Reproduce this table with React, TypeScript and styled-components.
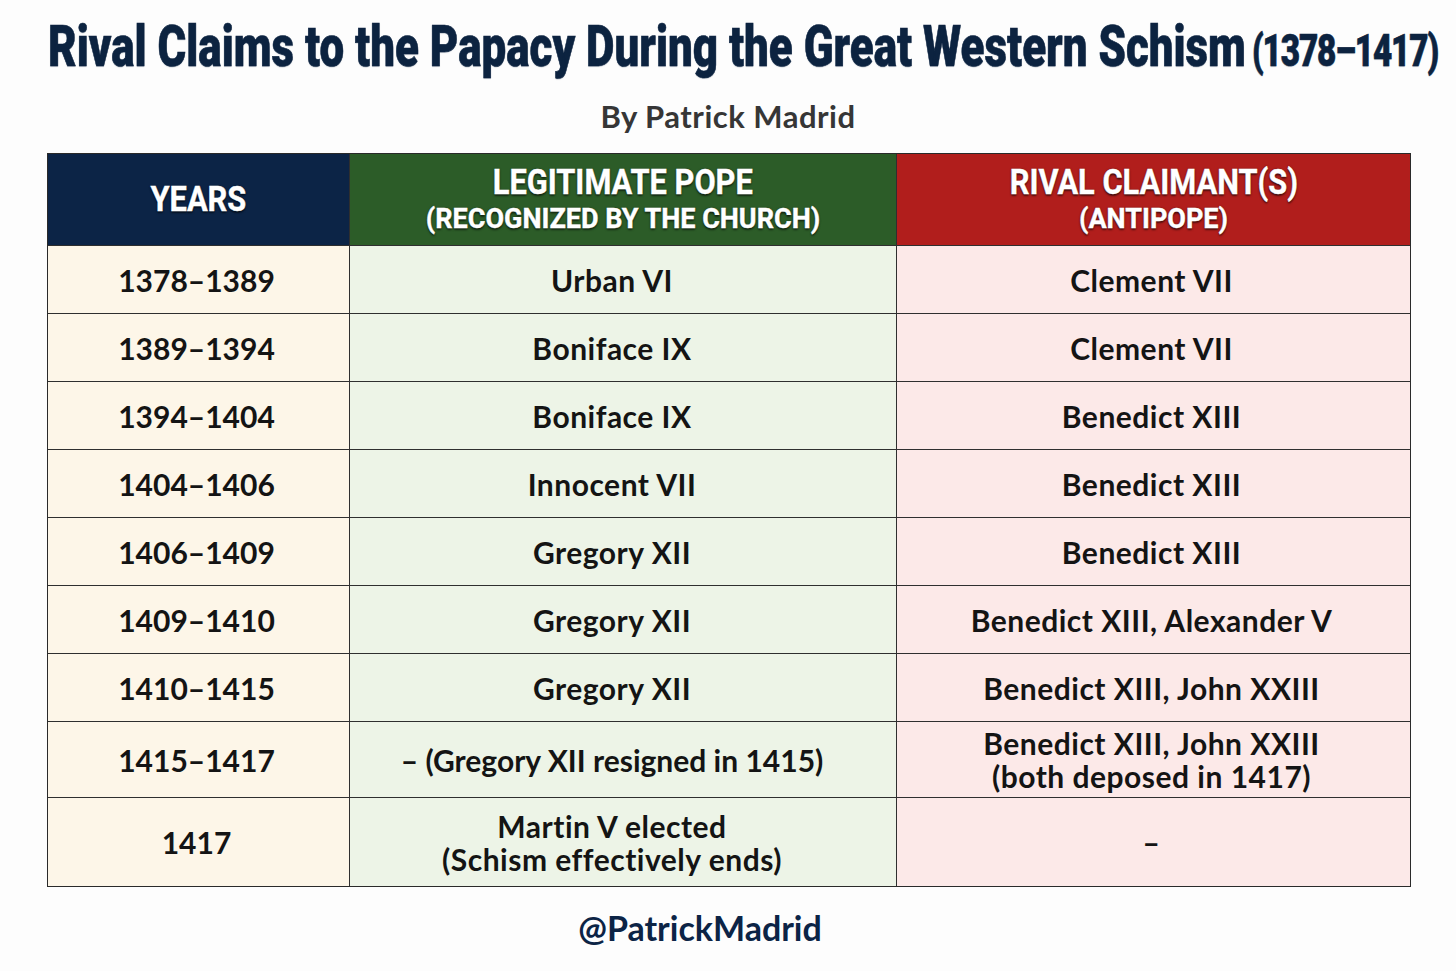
import React from 'react';
import styled, { createGlobalStyle } from 'styled-components';

const Global = createGlobalStyle`
  html, body { margin: 0; padding: 0; background: #fdfdfd; }
  body { font-family: Lato, "Noto Sans", sans-serif; }
`;

const Page = styled.div`
  width: 1456px;
  height: 971px;
  overflow: hidden;
  display: flex;
  flex-direction: column;
  align-items: center;
  box-sizing: border-box;
  padding-top: 12px;
`;

const Title = styled.h1`
  margin: 0;
  width: 100%;
  height: 72px;
  display: flex;
  justify-content: center;
  align-items: center;
  padding-left: 30px;
  box-sizing: border-box;
`;

const TitleText = styled.span`
  display: inline-block;
  white-space: nowrap;
  transform: scaleX(0.757);
  font-family: Roboto, "Liberation Sans", sans-serif;
  font-weight: 900;
  font-size: 58px;
  line-height: 72px;
  color: #0c2340;
  -webkit-text-stroke: 0.6px #0c2340;
  text-shadow: 0 1px 1px rgba(12, 35, 64, 0.25);
`;

const TitleYears = styled.span`
  font-size: 44px;
  letter-spacing: -1.5px;
  margin-left: 8px;
`;

const Byline = styled.div`
  margin-top: 12px;
  height: 40px;
  line-height: 40px;
  font-family: Lato, sans-serif;
  font-weight: 700;
  font-size: 31px;
  letter-spacing: 0.5px;
  color: #363636;
`;

const Table = styled.div`
  margin-top: 17px;
  margin-left: 2px;
  display: grid;
  grid-template-columns: 302px 547px 513px;
  grid-template-rows: 92px repeat(7, 68px) 76px 88px;
  border: 1.5px solid #2a2a2a;
`;

type Kind = 'years' | 'legit' | 'rival';

const headBg: Record<Kind, string> = {
  years: '#0c2446',
  legit: '#2c5c28',
  rival: '#b11e1c',
};

const bodyBg: Record<Kind, string> = {
  years: '#fdf6e8',
  legit: '#edf4e7',
  rival: '#fce9e8',
};

const Cell = styled.div<{ $kind: Kind; $head?: boolean; $lastRow?: boolean }>`
  box-sizing: border-box;
  display: flex;
  flex-direction: column;
  align-items: center;
  justify-content: center;
  text-align: center;
  padding-right: ${(p) => (!p.$head && p.$kind === 'legit' ? '22px' : p.$head ? '0' : '4px')};
  background: ${(p) => (p.$head ? headBg[p.$kind] : bodyBg[p.$kind])};
  border-right: ${(p) => (p.$kind === 'rival' ? 'none' : '1.5px solid #2f2f2f')};
  border-bottom: ${(p) => (p.$lastRow ? 'none' : '1.5px solid #2f2f2f')};
  color: #141414;
`;

const HeadMain = styled.span`
  display: block;
  white-space: nowrap;
  transform: scaleX(0.88);
  font-family: Roboto, "Liberation Sans", sans-serif;
  font-weight: 700;
  font-size: 35px;
  line-height: 38px;
  color: #fff;
  -webkit-text-stroke: 0.4px #fff;
  text-shadow: 0 2px 2px rgba(0, 0, 0, 0.55), 0 0 2px rgba(0, 0, 0, 0.5);
`;

const HeadSub = styled(HeadMain)`
  font-size: 27px;
  line-height: 34px;
  transform: none;
`;

const Main = styled.span<{ $tight?: boolean }>`
  display: block;
  white-space: nowrap;
  font-family: Lato, "Noto Sans", sans-serif;
  font-weight: 700;
  font-size: 30px;
  line-height: 34px;
  letter-spacing: ${(p) => (p.$tight ? '0' : '0.5px')};
`;

const Sub = styled(Main)`
  line-height: 33px;
`;

const Handle = styled.div`
  margin-top: 21px;
  margin-right: 56px;
  height: 40px;
  line-height: 40px;
  font-family: Lato, sans-serif;
  font-weight: 700;
  font-size: 34px;
  color: #0c2446;
`;

type Row = { years: string; legit: string[]; rival: string[] };

const rows: Row[] = [
  { years: '1378–1389', legit: ['Urban VI'], rival: ['Clement VII'] },
  { years: '1389–1394', legit: ['Boniface IX'], rival: ['Clement VII'] },
  { years: '1394–1404', legit: ['Boniface IX'], rival: ['Benedict XIII'] },
  { years: '1404–1406', legit: ['Innocent VII'], rival: ['Benedict XIII'] },
  { years: '1406–1409', legit: ['Gregory XII'], rival: ['Benedict XIII'] },
  { years: '1409–1410', legit: ['Gregory XII'], rival: ['Benedict XIII, Alexander V'] },
  { years: '1410–1415', legit: ['Gregory XII'], rival: ['Benedict XIII, John XXIII'] },
  {
    years: '1415–1417',
    legit: ['– (Gregory XII resigned in 1415)'],
    rival: ['Benedict XIII, John XXIII', '(both deposed in 1417)'],
  },
  {
    years: '1417',
    legit: ['Martin V elected', '(Schism effectively ends)'],
    rival: ['–'],
  },
];

const Lines: React.FC<{ lines: string[] }> = ({ lines }) => (
  <>
    {lines.map((l, i) =>
      i === 0 ? (
        <Main key={i} $tight={l.length > 28}>
          {l}
        </Main>
      ) : (
        <Sub key={i}>{l}</Sub>
      ),
    )}
  </>
);

export default function App() {
  return (
    <>
      <Global />
      <Page>
        <Title>
          <TitleText>
            Rival Claims to the Papacy During the Great Western Schism
            <TitleYears>(1378–1417)</TitleYears>
          </TitleText>
        </Title>
        <Byline>By Patrick Madrid</Byline>
        <Table>
          <Cell $kind="years" $head>
            <HeadMain>YEARS</HeadMain>
          </Cell>
          <Cell $kind="legit" $head>
            <HeadMain>LEGITIMATE POPE</HeadMain>
            <HeadSub>(RECOGNIZED BY THE CHURCH)</HeadSub>
          </Cell>
          <Cell $kind="rival" $head>
            <HeadMain>RIVAL CLAIMANT(S)</HeadMain>
            <HeadSub>(ANTIPOPE)</HeadSub>
          </Cell>
          {rows.map((r, i) => {
            const last = i === rows.length - 1;
            return (
              <React.Fragment key={i}>
                <Cell $kind="years" $lastRow={last}>
                  <Main $tight>{r.years}</Main>
                </Cell>
                <Cell $kind="legit" $lastRow={last}>
                  <Lines lines={r.legit} />
                </Cell>
                <Cell $kind="rival" $lastRow={last}>
                  <Lines lines={r.rival} />
                </Cell>
              </React.Fragment>
            );
          })}
        </Table>
        <Handle>@PatrickMadrid</Handle>
      </Page>
    </>
  );
}
